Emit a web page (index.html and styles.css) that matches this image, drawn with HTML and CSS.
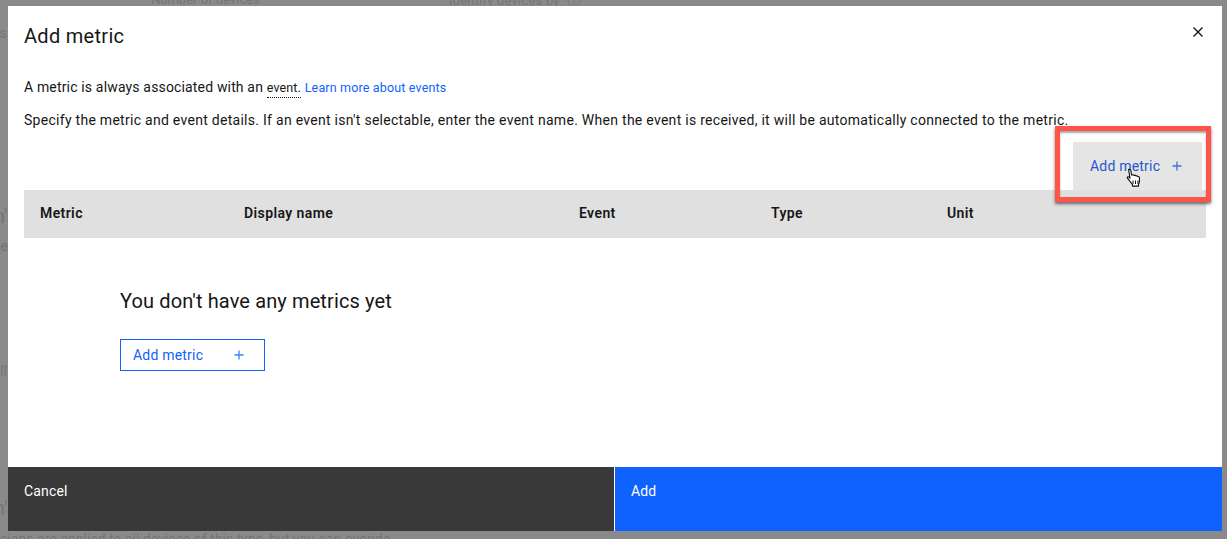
FILE: index.html
```html
<!DOCTYPE html>
<html lang="en">
<head>
<meta charset="utf-8">
<title>Add metric</title>
<link rel="stylesheet" href="styles.css">
</head>
<body>
<div class="backdrop">
  <span class="bg-text bg-a">Number of devices</span>
  <span class="bg-text bg-b">Identify devices by <span class="bg-info">&#9432;</span></span>
  <span class="bg-text bg-c">es</span>
  <span class="bg-text bg-d">n'</span>
  <span class="bg-text bg-e">te</span>
  <span class="bg-text bg-f">ll</span>
  <span class="bg-text bg-g">n'</span>
  <span class="bg-text bg-h">sions are applied to all devices of this type, but you can overide.</span>
</div>
<section class="modal">
  <header class="modal-head">
    <h1 class="modal-title">Add metric</h1>
    <svg class="close" width="16" height="16" viewBox="0 0 16 16"><path d="M3.500 3.500l9 9M12.500 3.500l-9 9" stroke="#161616" stroke-width="1.400" fill="none"/></svg>
  </header>
  <div class="modal-body">
    <p class="line line-first">A metric is always associated with an <span class="term">event.</span> <a class="link">Learn more about events</a></p>
    <p class="line line-second">Specify the metric and event details. If an event isn't selectable, enter the event name. When the event is received, it will be automatically connected to the metric.</p>
    <div class="toolbar">
      <button class="tool-btn"><span>Add metric</span><svg class="plus" width="10" height="10" viewBox="0 0 10 10"><path d="M5 .5v9M.5 5h9" stroke="currentColor" stroke-width="1.300"/></svg></button>
    </div>
    <div class="thead">
      <span class="th th-metric">Metric</span>
      <span class="th th-name">Display name</span>
      <span class="th th-event">Event</span>
      <span class="th th-type">Type</span>
      <span class="th">Unit</span>
    </div>
    <div class="empty">
      <h2 class="empty-title">You don't have any metrics yet</h2>
      <button class="empty-btn"><span>Add metric</span><svg class="plus" width="10" height="10" viewBox="0 0 10 10"><path d="M5 .5v9M.5 5h9" stroke="currentColor" stroke-width="1.300"/></svg></button>
    </div>
  </div>
  <footer class="modal-foot">
    <div class="foot-btn cancel">Cancel</div>
    <div class="foot-btn add">Add</div>
  </footer>
</section>
<div class="callout"></div>
<svg class="cursor" width="18" height="20" viewBox="0 0 18 20">
  <path d="M3.500 1.500c1-.6 2.200 0 2.400 1l.6 4.500 1.500-.2c.8 0 1.200.3 1.400.7.700-.3 1.500-.1 1.800.5.800-.3 1.600 0 1.800.7.800-.2 1.500.3 1.500 1.200v3.200c0 1.500-.7 2.400-1 3.500v1.500H7.500v-1.500c-.8-1.300-2-2.500-3.500-4.500-.9-1.100-1.900-2-1.700-2.800.3-.7 1.200-.6 1.800 0l.9.900-1.200-7.500c-.1-.5-.2-.9-.3-1.200z" fill="#fff" stroke="#111" stroke-width="1.100" stroke-linejoin="round"/>
  <path d="M8 12.500v3.500M10.500 12.500v3.500M13 12.500v3.500" stroke="#111" stroke-width="1"/>
</svg>
</body>
</html>
```
FILE: styles.css
```css
* { box-sizing: border-box; }
html, body { margin: 0; height: 539px; overflow: hidden; }
body { position: relative; background: #8a8a8a; font-family: Roboto, "Noto Sans", sans-serif; color: #161616; }
.backdrop { position: absolute; inset: 0; }
.bg-text { position: absolute; font-size: 14px; color: #757575; white-space: nowrap; line-height: 16px; }
.bg-a { left: 151px; top: -8px; font-size: 13px; }
.bg-b { left: 449px; top: -8px; font-size: 13px; letter-spacing: .2px; }
.bg-info { margin-left: 4px; font-size: 14px; }
.bg-c { left: -8px; top: 25px; }
.bg-d { left: -6px; top: 208px; font-size: 20px; }
.bg-e { left: -4px; top: 238px; }
.bg-f { left: 0; top: 363px; }
.bg-g { left: -6px; top: 500px; font-size: 20px; }
.bg-h { left: 0; top: 531px; }
.modal { position: absolute; left: 8px; top: 6px; width: 1214px; height: 525px; background: #fff; display: flex; flex-direction: column; }
.modal-head { height: 60px; padding: 18px 16px 0; display: flex; justify-content: space-between; align-items: flex-start; flex: none; }
.modal-title { margin: 0; font-size: 20px; font-weight: 400; line-height: 24px; letter-spacing: .3px; }
.close { margin-right: 0; }
.modal-body { flex: 1; padding: 0 16px; display: flex; flex-direction: column; }
.line { margin: 16px 0 0; font-size: 14px; line-height: 16px; height: 16px; white-space: nowrap; letter-spacing: .16px; }
.line-first { margin-top: 13px; }
.line-second { margin-top: 17px; letter-spacing: .28px; }
.term { font-size: 12.500px; border-bottom: 1px dotted #161616; padding-bottom: 2px; }
.link { color: #0f62fe; font-size: 12.500px; }
.toolbar { height: 60px; margin-top: 2px; margin-right: 4px; display: flex; justify-content: flex-end; align-items: flex-end; flex: none; }
.tool-btn { width: 129px; height: 48px; border: 0; background: #e5e5e5; color: #1f55d0; font: inherit; font-size: 14px; letter-spacing: .2px; padding: 0 20px 0 17px; display: flex; align-items: center; justify-content: space-between; }
.thead { height: 48px; background: #e0e0e0; width: 1182px; display: flex; align-items: center; padding: 0 0 3px 16px; flex: none; }
.th { font-size: 14px; font-weight: 600; letter-spacing: .4px; }
.th-metric { width: 204px; }
.th-name { width: 335px; }
.th-event { width: 192px; }
.th-type { width: 176px; }
.empty { padding: 51px 0 0 96px; flex: 1; }
.empty-title { margin: 0; font-size: 20px; font-weight: 400; line-height: 24px; letter-spacing: .12px; }
.empty-btn { margin-top: 26px; width: 145px; height: 32px; background: #fff; border: 1px solid #0f62fe; color: #0f62fe; font: inherit; font-size: 14px; letter-spacing: .2px; padding: 0 20px 0 12px; display: flex; align-items: center; justify-content: space-between; }
.plus { flex: none; opacity: .8; }
.modal-foot { height: 64px; display: flex; flex: none; }
.foot-btn { color: #fff; font-size: 14px; letter-spacing: .16px; padding: 15px 16px; line-height: 18px; }
.cancel { width: 607px; background: #393939; border-right: 1px solid #fff; }
.add { flex: 1; background: #0f62fe; }
.callout { position: absolute; left: 1055px; top: 126px; width: 156px; height: 76px; border: 5px solid #fd5549; box-shadow: 0 2px 3px rgba(0,0,0,.55), inset 0 2px 2px rgba(0,0,0,.35); }
.cursor { position: absolute; left: 1125px; top: 168px; }
```
